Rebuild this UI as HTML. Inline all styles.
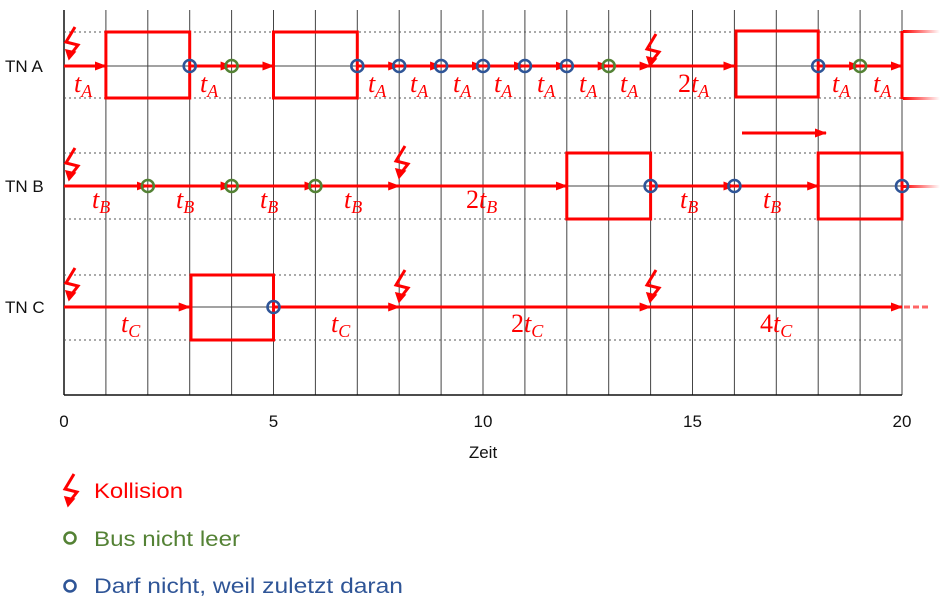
<!DOCTYPE html>
<html><head><meta charset="utf-8"><style>
html,body{margin:0;padding:0;background:#fff;width:949px;height:607px;overflow:hidden}
svg{display:block}
.m{font-family:"Liberation Serif",serif;font-style:italic;font-size:26px;fill:#f00}
.s{font-size:18px}
.ax{font-family:"Liberation Sans",sans-serif;font-size:17px;fill:#111}
.lg{font-family:"Liberation Sans",sans-serif;font-size:21px}
</style></head><body>
<svg width="949" height="607" viewBox="0 0 949 607" xmlns="http://www.w3.org/2000/svg">
<defs>
<marker id="ah" markerWidth="12" markerHeight="10" refX="11" refY="5" orient="auto" markerUnits="userSpaceOnUse" viewBox="0 0 12 10"><path d="M0,0.5 L12,5 L0,9.5 Z" fill="#f00"/></marker>
<linearGradient id="fd" x1="0" x2="1"><stop offset="0" stop-color="#f00"/><stop offset="1" stop-color="#f00" stop-opacity="0"/></linearGradient>
<g id="bolt"><path d="M12,0 L3,15 L15,18 L8,27" fill="none" stroke="#f00" stroke-width="3"/><path d="M3,23 L6,32 L12,25 Z" fill="#f00" stroke="#f00" stroke-width="1.5"/></g>
</defs>
<g stroke="#444" stroke-width="1">
<line x1="105.9" y1="10" x2="105.9" y2="395"/><line x1="147.8" y1="10" x2="147.8" y2="395"/><line x1="189.7" y1="10" x2="189.7" y2="395"/><line x1="231.6" y1="10" x2="231.6" y2="395"/><line x1="273.5" y1="10" x2="273.5" y2="395"/><line x1="315.4" y1="10" x2="315.4" y2="395"/><line x1="357.3" y1="10" x2="357.3" y2="395"/><line x1="399.2" y1="10" x2="399.2" y2="395"/><line x1="441.1" y1="10" x2="441.1" y2="395"/><line x1="483" y1="10" x2="483" y2="395"/><line x1="524.9" y1="10" x2="524.9" y2="395"/><line x1="566.8" y1="10" x2="566.8" y2="395"/><line x1="608.7" y1="10" x2="608.7" y2="395"/><line x1="650.6" y1="10" x2="650.6" y2="395"/><line x1="692.5" y1="10" x2="692.5" y2="395"/><line x1="734.4" y1="10" x2="734.4" y2="395"/><line x1="776.3" y1="10" x2="776.3" y2="395"/><line x1="818.2" y1="10" x2="818.2" y2="395"/><line x1="860.1" y1="10" x2="860.1" y2="395"/><line x1="902" y1="10" x2="902" y2="395"/>
</g>
<g stroke="#111" stroke-width="1.5"><line x1="64" y1="10" x2="64" y2="395"/><line x1="64" y1="395" x2="902" y2="395"/></g>
<g stroke="#444" stroke-width="1"><line x1="64" y1="66" x2="902" y2="66"/><line x1="64" y1="186" x2="902" y2="186"/><line x1="64" y1="307" x2="902" y2="307"/></g>
<g stroke="#555" stroke-width="1" stroke-dasharray="2,3">
<line x1="64" y1="32" x2="902" y2="32"/><line x1="64" y1="98" x2="902" y2="98"/>
<line x1="64" y1="153" x2="902" y2="153"/><line x1="64" y1="219" x2="902" y2="219"/>
<line x1="64" y1="275" x2="902" y2="275"/><line x1="64" y1="340" x2="902" y2="340"/>
</g>
<g class="ax" font-size="18"><text x="5" y="72">TN A</text><text x="5" y="192">TN B</text><text x="5" y="313">TN C</text></g>
<g class="ax" text-anchor="middle"><text x="64" y="427">0</text><text x="273.5" y="427">5</text><text x="483" y="427">10</text><text x="692.5" y="427">15</text><text x="902" y="427">20</text><text x="483" y="458">Zeit</text></g>

<g stroke="#f00" stroke-width="3" fill="none">
<line x1="64" y1="66" x2="105.9" y2="66" marker-end="url(#ah)"/>
<rect x="105.9" y="32" width="83.8" height="66"/>
<line x1="189.7" y1="66" x2="231.6" y2="66" marker-end="url(#ah)"/>
<line x1="231.6" y1="66" x2="273.5" y2="66" marker-end="url(#ah)"/>
<rect x="273.5" y="32" width="83.8" height="66"/>
<line x1="357.3" y1="66" x2="399.2" y2="66" marker-end="url(#ah)"/>
<line x1="399.2" y1="66" x2="441.1" y2="66" marker-end="url(#ah)"/>
<line x1="441.1" y1="66" x2="483" y2="66" marker-end="url(#ah)"/>
<line x1="483" y1="66" x2="524.9" y2="66" marker-end="url(#ah)"/>
<line x1="524.9" y1="66" x2="566.8" y2="66" marker-end="url(#ah)"/>
<line x1="566.8" y1="66" x2="608.7" y2="66" marker-end="url(#ah)"/>
<line x1="608.7" y1="66" x2="650.6" y2="66" marker-end="url(#ah)"/>
<line x1="650.6" y1="66" x2="734.4" y2="66" marker-end="url(#ah)"/>
<rect x="736" y="31" width="82.2" height="66"/>
<line x1="818.2" y1="66" x2="860.1" y2="66" marker-end="url(#ah)"/>
<line x1="860.1" y1="66" x2="902" y2="66" marker-end="url(#ah)"/>
<line x1="902" y1="31" x2="902" y2="99"/>
<line x1="742" y1="133" x2="826" y2="133" marker-end="url(#ah)"/>
<line x1="64" y1="186" x2="147.8" y2="186" marker-end="url(#ah)"/>
<line x1="147.8" y1="186" x2="231.6" y2="186" marker-end="url(#ah)"/>
<line x1="231.6" y1="186" x2="315.4" y2="186" marker-end="url(#ah)"/>
<line x1="315.4" y1="186" x2="399.2" y2="186" marker-end="url(#ah)"/>
<line x1="399.2" y1="186" x2="566.8" y2="186" marker-end="url(#ah)"/>
<rect x="566.8" y="153" width="83.8" height="66"/>
<line x1="650.6" y1="186" x2="734.4" y2="186" marker-end="url(#ah)"/>
<line x1="734.4" y1="186" x2="818.2" y2="186" marker-end="url(#ah)"/>
<rect x="818.2" y="153" width="83.8" height="66"/>
<line x1="64" y1="307" x2="189.7" y2="307" marker-end="url(#ah)"/>
<rect x="191" y="275" width="82.5" height="65"/>
<line x1="273.5" y1="307" x2="399.2" y2="307" marker-end="url(#ah)"/>
<line x1="399.2" y1="307" x2="650.6" y2="307" marker-end="url(#ah)"/>
<line x1="650.6" y1="307" x2="902" y2="307" marker-end="url(#ah)"/>
</g>
<rect x="903" y="30" width="37" height="3" fill="url(#fd)"/>
<rect x="903" y="97" width="37" height="3" fill="url(#fd)"/>
<rect x="903" y="185" width="37" height="3" fill="url(#fd)"/>
<g stroke="#f00" stroke-width="3" stroke-dasharray="6,3" opacity="0.6"><line x1="904" y1="307" x2="930" y2="307"/></g>
<use href="#bolt" x="63" y="27"/><use href="#bolt" x="644" y="34"/>
<use href="#bolt" x="63" y="148"/><use href="#bolt" x="393" y="146"/>
<use href="#bolt" x="63" y="268"/><use href="#bolt" x="393" y="270"/><use href="#bolt" x="644" y="270"/>
<g fill="none" stroke-width="2.6">
<g stroke="#2f5597">
<circle cx="189.7" cy="66" r="6"/><circle cx="357.3" cy="66" r="6"/><circle cx="399.2" cy="66" r="6"/><circle cx="441.1" cy="66" r="6"/><circle cx="483" cy="66" r="6"/><circle cx="524.9" cy="66" r="6"/><circle cx="566.8" cy="66" r="6"/><circle cx="818.2" cy="66" r="6"/>
<circle cx="650.6" cy="186" r="6"/><circle cx="734.4" cy="186" r="6"/><circle cx="902" cy="186" r="6"/>
<circle cx="273.5" cy="307" r="6"/>
</g>
<g stroke="#548235">
<circle cx="231.6" cy="66" r="6"/><circle cx="608.7" cy="66" r="6"/><circle cx="860.1" cy="66" r="6"/>
<circle cx="147.8" cy="186" r="6"/><circle cx="231.6" cy="186" r="6"/><circle cx="315.4" cy="186" r="6"/>
</g>
</g>
<g class="m">
<text x="74" y="92">t<tspan class="s" dy="5">A</tspan></text>
<text x="200" y="92">t<tspan class="s" dy="5">A</tspan></text>
<text x="368" y="92">t<tspan class="s" dy="5">A</tspan></text>
<text x="410" y="92">t<tspan class="s" dy="5">A</tspan></text>
<text x="453" y="92">t<tspan class="s" dy="5">A</tspan></text>
<text x="494" y="92">t<tspan class="s" dy="5">A</tspan></text>
<text x="537" y="92">t<tspan class="s" dy="5">A</tspan></text>
<text x="579" y="92">t<tspan class="s" dy="5">A</tspan></text>
<text x="620" y="92">t<tspan class="s" dy="5">A</tspan></text>
<text x="678" y="92"><tspan font-style="normal">2</tspan>t<tspan class="s" dy="5">A</tspan></text>
<text x="832" y="92">t<tspan class="s" dy="5">A</tspan></text>
<text x="873" y="92">t<tspan class="s" dy="5">A</tspan></text>
<text x="92" y="208">t<tspan class="s" dy="5">B</tspan></text>
<text x="176" y="208">t<tspan class="s" dy="5">B</tspan></text>
<text x="260" y="208">t<tspan class="s" dy="5">B</tspan></text>
<text x="344" y="208">t<tspan class="s" dy="5">B</tspan></text>
<text x="466" y="208"><tspan font-style="normal">2</tspan>t<tspan class="s" dy="5">B</tspan></text>
<text x="680" y="208">t<tspan class="s" dy="5">B</tspan></text>
<text x="763" y="208">t<tspan class="s" dy="5">B</tspan></text>
<text x="121" y="332">t<tspan class="s" dy="5">C</tspan></text>
<text x="331" y="332">t<tspan class="s" dy="5">C</tspan></text>
<text x="511" y="332"><tspan font-style="normal">2</tspan>t<tspan class="s" dy="5">C</tspan></text>
<text x="760" y="332"><tspan font-style="normal">4</tspan>t<tspan class="s" dy="5">C</tspan></text>
</g>
<use href="#bolt" x="62" y="474"/>
<circle cx="70" cy="538" r="5.5" fill="none" stroke="#548235" stroke-width="2.6"/>
<circle cx="70" cy="586" r="5.5" fill="none" stroke="#2f5597" stroke-width="2.6"/>
<text class="lg" x="94" y="498" fill="#f00" textLength="89" lengthAdjust="spacingAndGlyphs">Kollision</text>
<text class="lg" x="94" y="546" fill="#548235" textLength="146" lengthAdjust="spacingAndGlyphs">Bus nicht leer</text>
<text class="lg" x="94" y="593" fill="#2f5597" textLength="309" lengthAdjust="spacingAndGlyphs">Darf nicht, weil zuletzt daran</text>
</svg>
</body></html>
